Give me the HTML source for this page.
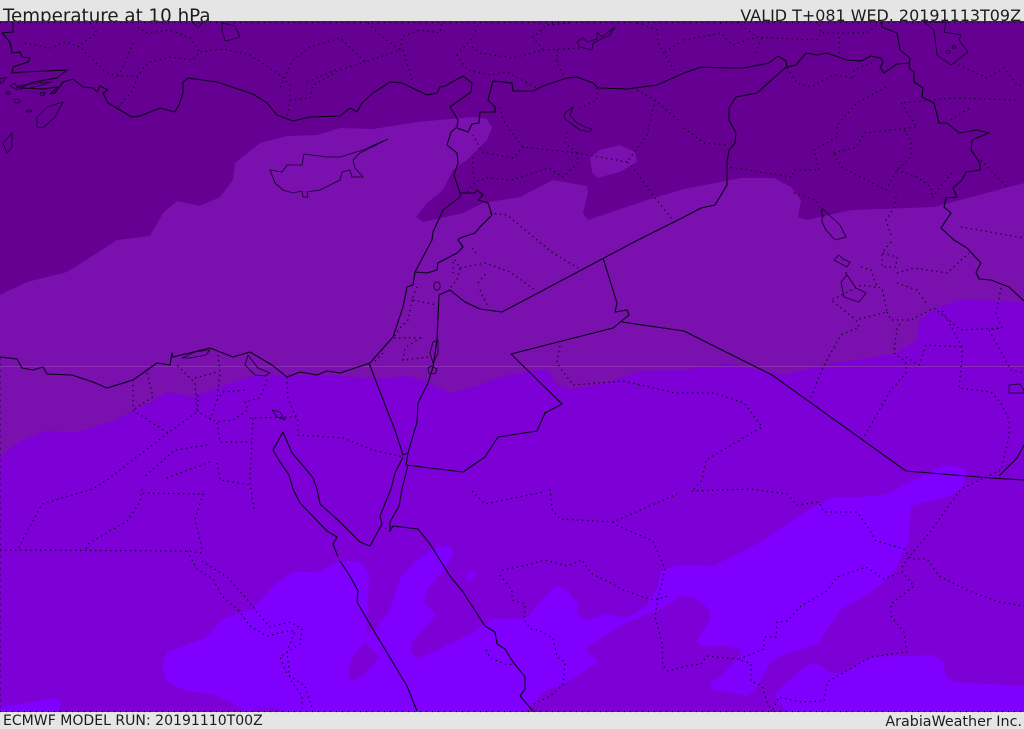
<!DOCTYPE html>
<html><head><meta charset="utf-8"><title>Temperature at 10 hPa</title>
<style>
html,body{margin:0;padding:0;background:#e5e5e5;width:1024px;height:729px;overflow:hidden}
svg{display:block}
text{font-family:"DejaVu Sans","Liberation Sans",sans-serif;fill:#1c1c1c}
.c{fill:none;stroke:#060214;stroke-width:1.1;stroke-linejoin:round}
.t{fill:none;stroke:#12022c;stroke-width:.85;stroke-linejoin:round}
.d{fill:none;stroke:#08011c;stroke-width:1.2;stroke-dasharray:1.3 3.7}
</style></head><body>
<svg width="1024" height="729" viewBox="0 0 1024 729" xmlns="http://www.w3.org/2000/svg">
<rect width="1024" height="729" fill="#e5e5e5"/>
<text x="3" y="22" font-size="18.26">Temperature at 10 hPa</text>
<text x="1021" y="21" font-size="15.95" text-anchor="end">VALID T+081 WED. 20191113T09Z</text>
<text x="3" y="725" font-size="14.05">ECMWF MODEL RUN: 20191110T00Z</text>
<text x="1022" y="726" font-size="14.3" text-anchor="end">ArabiaWeather Inc.</text>
<rect x="0" y="21" width="1024" height="691" fill="#7d00d6"/>
<!-- mid band -->
<polygon fill="#7a10ae" points="0,21 1024,21 1024,302 961,299 937,308 919,320 917,340 894,354 824,365 784,375 727,363 684,370 640,371 607,383 570,389 557,385 550,373 543,369 507,375 473,387 450,393 427,382 407,376 373,379 340,376 257,375 233,382 193,397 167,392 140,408 110,422 77,432 43,431 17,443 0,457"/>
<line x1="0" y1="366.5" x2="1024" y2="366.5" stroke="#8a2cb4" stroke-width="1"/>
<!-- dark top -->
<polygon fill="#660092" points="0,21 1024,21 1024,183 934,207 851,210 807,220 798,217 801,200 791,187 774,178 741,178 684,189 657,197 623,208 588,220 583,213 588,192 587,186 553,180 520,197 483,203 463,213 423,222 416,217 427,203 443,190 453,170 467,160 487,140 492,128 487,119 473,117 417,122 373,129 340,128 317,135 287,136 260,143 235,163 233,180 220,197 200,206 177,201 163,213 150,236 117,240 97,253 67,272 27,282 0,295"/>
<polygon fill="#7a10ae" points="590,157 600,150 620,145 635,152 637,162 620,172 597,178 592,172"/>
<!-- brightest -->
<polygon fill="#7f00ff" points="162,666 167,652 207,637 223,619 253,609 273,586 293,572 317,572 340,561 357,561 369,572 368,602 366,634 373,631 388,614 400,579 417,559 437,547 450,546 453,552 447,566 427,589 424,602 436,614 412,642 410,652 418,658 433,652 473,632 493,619 527,618 540,602 557,585 567,591 577,602 578,616 587,620 607,614 627,618 647,606 658,586 660,572 673,566 704,565 711,567 761,542 797,517 831,497 861,497 884,495 914,480 944,465 964,467 966,473 961,489 951,496 931,501 911,506 909,539 897,566 884,582 864,596 841,609 827,629 817,644 794,651 774,659 766,669 759,686 747,696 734,693 712,689 710,684 721,676 741,654 741,649 727,646 701,646 697,641 711,617 709,609 694,597 680,596 660,609 627,622 607,634 588,646 587,652 598,661 573,679 543,692 525,712 287,712 273,707 247,711 230,702 213,694 187,691 167,682"/>
<polygon fill="#7d00d6" points="365,642 379,657 367,672 352,682 348,676 352,656"/>
<polygon fill="#7f00ff" points="466,579 470,572 477,571 475,576 467,582"/>
<polygon fill="#7f00ff" points="0,707 33,702 57,698 61,701 58,712 0,712"/>
<polygon fill="#7f00ff" points="776,692 794,676 811,663 821,666 831,674 844,672 871,657 934,655 943,662 946,677 954,682 1024,686 1024,712 787,712 776,697"/>
<!-- dotted internal boundaries -->
<g class="d">
<path d="M25 43L50 48 65 42 80 47 90 57 107 73 117 76 138 76 145 66 150 62 170 57 193 60 200 52 223 49 250 55 280 75 290 85 290 100 287 118"/>
<path d="M133 43L123 67 117 76M138 27L147 33 170 30 190 38 200 52M90 23L97 33 80 45M118 107L133 90 138 76"/>
<path d="M280 87L293 60 310 47 340 38 365 62 400 50 380 35 367 22M290 100L310 98 313 85 340 70 365 62M307 82L340 68"/>
<path d="M400 50L402 37 420 30 440 33 442 22M403 50L413 83M457 55L473 37 478 25M457 55L467 70 490 75 507 72 537 88"/>
<path d="M472 47L480 53 513 58 543 50 533 37 547 25 570 23M543 50L580 48M557 50L557 63 565 78M637 23L657 30 658 43 675 72M665 52L680 42"/>
<path d="M597 88L597 100 580 108M637 90L655 100 680 122M655 100L647 135 627 162 633 167 655 198 673 220M627 162L577 153 523 147 513 158 482 152 473 135M500 107L503 120 517 140 523 147M577 153L578 163 563 177 548 168 512 180 487 178 475 182 467 192M473 157L473 172 475 182M567 132L565 143 577 153M490 213L507 215 537 240 553 253 578 268"/>
<path d="M684 40L721 33 732 45 757 37 817 40 821 33 867 33 879 23M737 22L757 37M721 23L718 27M762 38L754 57M819 25L821 33M839 37L839 57"/>
<path d="M787 68L797 83 811 87 834 75 854 78 854 70 874 62M886 87L857 103 837 125 837 137 814 150 819 170 794 170 792 177 727 167"/>
<path d="M834 153L857 147 864 133 917 127 901 103 951 98 1017 100M904 130L911 140 911 157 897 170 886 190 841 167 834 153M897 170L917 177 931 187 932 198 954 170M951 120L971 107M896 197L894 208 886 220 892 238"/>
<path d="M684 128L704 143 729 145M794 193L816 200 824 217M981 160L1007 187M954 63L987 78 1004 68 1017 85 1024 85M961 227L1024 238"/>
<path d="M133 380L133 410 137 413 168 433 197 412 195 383 177 365M147 373L153 397 133 410M218 355L220 373 217 400 210 420M195 378L217 372M198 395L198 412 217 422 233 420 248 410 245 402 260 398 267 380M217 400L223 392 247 390M250 418L297 417"/>
<path d="M287 377L288 400 298 420 298 435 343 438 373 450 403 457M253 418L250 480 251 489 254 510M217 423L220 442 252 442M168 433L107 480 93 489 42 504 18 549M207 445L175 450 143 478M210 462L180 473 165 479M217 463L220 480 252 485M142 489L140 502 127 521 88 544 86 549M143 493L193 494 203 494 195 519 202 549"/>
<path d="M0 550L187 551 202 553M187 551L197 569 213 579 222 596 240 612 250 626 267 636 287 631 295 631 287 652 290 679 302 696 302 711M202 561L227 577 247 599 260 616 270 627 290 622 302 629 300 644 280 657 287 674 305 686 313 711"/>
<path d="M560 346L557 363 573 385 623 381 675 393 714 393 744 403 762 427 706 460 702 480 692 491M472 491L485 504 543 492M550 489L552 509 560 519 613 522 677 494M692 491L751 489 787 494 797 505 819 502 824 512 857 512 867 526 876 541 904 549 911 559 927 559 939 576 969 591 999 602 1024 606"/>
<path d="M613 522L618 526 653 541 665 569 657 604 655 617 662 642 663 666 668 671 687 666 701 664 707 656 737 659 751 664 751 681 762 686 767 702 772 711"/>
<path d="M739 659L764 649 764 637 776 637 777 622 787 621 801 606 827 591 837 577 866 567 884 579 902 572 914 586 891 604 891 616 904 632 907 652 871 657 827 682 824 701 801 702 779 697 772 711M902 567L909 557 927 536 961 489 1001 470 1009 437 1009 420 1001 403 991 392 959 388 962 357 962 347 941 308"/>
<path d="M809 402L824 365 841 335 859 327 856 320 887 312 882 288 861 285 842 295 831 300 856 320M887 312L891 320 911 320 934 308 961 330 1001 328M862 440L891 390 906 373 906 362 894 353 897 328 901 322M906 357L919 365 926 345 962 347M897 283L917 290 926 303M861 267L871 270 877 287M891 242L882 253 897 257 896 267 882 267 882 253M897 273L914 268 947 273 969 253M1001 288L996 313 1002 328 989 330 1011 370 1024 373"/>
<path d="M455 260L460 268 457 280 450 288M453 262L453 277M460 268L485 263 510 272 535 290M478 283L487 272M480 290L488 307M472 248L477 254M417 287L412 300 437 305M412 300L408 320 400 328 393 338 420 338 405 348 403 360 428 357M383 353L373 363"/>
<path d="M381 525L392 533M502 570L527 565 545 560 567 566 582 560 592 574 611 583 621 589 632 593 640 596 654 600 668 596M500 575L512 590 512 600 525 604 524 620 531 629 538 630 553 638 557 657 565 662 563 685 550 696 532 705M486 650L490 658 505 664 520 665"/>
<path d="M0 358V712" stroke-dasharray="1.2 4.8"/>
<path d="M0 22.5H1024M0 711.5H1024" stroke-dasharray="1 5"/>
</g>
<!-- coastlines and borders -->
<g class="c">
<path d="M13 23L13 32 2 33 10 42 12 53 20 52 22 57 30 58 28 62 13 67 12 73 23 72 67 70 57 78 33 82 20 88 43 89 58 87 50 94 55 93 63 82 73 79 83 87 93 88 97 92 100 86 108 90 103 93 108 103 120 110 132 117 140 116 160 108 175 112 179 105 183 93 183 82 188 78 217 82 253 94 267 103 277 115 293 121 310 117 340 116 350 108 357 112 362 103 373 93 390 82 402 83 427 95 437 93 440 87 445 86 463 76 472 83 471 92 450 107 458 120 457 127 451 132 447 145 457 153 458 163 454 175 460 193 460 197 443 210 433 232 432 240 415 272 413 285 407 287 403 307 393 337 370 363 340 373 327 371 317 375 300 372 287 377 272 365 250 352 233 357 210 348 173 357 172 353 170 365 157 363 133 380 107 388 93 382 72 375 47 374 43 367 33 370 22 368 17 359 0 357"/>
<path d="M457 128L468 132 472 124 479 123 480 112 495 112 495 107 488 100 493 81 512 83 513 91 533 91 543 86 567 78 577 77 593 83 598 88 627 89 657 85 684 73 701 67 727 68 744 68 769 63 778 56 786 61 787 67 796 65 806 53 817 55 827 53 847 60 861 61 871 56 881 58 883 63 880 67 884 73 897 64 910 63"/>
<path d="M881 22L882 27 897 33 900 50 910 58 909 68 914 72 914 82 923 88 922 97 934 103 939 123 947 123 959 133 977 130 989 133 972 140 971 150 980 163 980 170 966 172 962 180 953 188 957 197 946 198 944 207 951 213 941 228 954 240 967 248 981 263 976 272 979 279 991 280 1009 287 1024 301"/>
<path d="M786 67L757 93 736 97 729 108 729 120 736 133 735 143 729 150 727 163 727 185 715 205 701 208 684 217 638 240 502 312 480 309 465 302 450 290 439 295 438 317 437 340 433 367 428 383 418 403 417 422 408 453 406 465 463 472 485 457 498 437 537 431 545 413 562 404 511 354 613 328 629 315 627 310 615 312 617 303 603 258"/>
<path d="M622 322L684 331 772 375 906 471 991 478 1024 480M999 476L1017 458 1024 445"/>
<path d="M460 193L475 193 477 190 483 195 478 200 488 203 492 215 480 227 475 233 460 238 458 240 463 247 457 253 438 263 437 270 427 273 415 272"/>
<path d="M369 363L387 410 395 430 403 455 408 453M403 457L395 473 391 489 380 516 382 524 370 546 360 542 340 522 320 504 317 489 313 478 305 468 292 453 283 432 273 450 280 462 289 475 293 489 300 503 327 531 337 537 333 544 338 557"/>
<path d="M408 465L402 489 399 506 390 522 390 531 393 526 418 529 430 544 450 576 463 592 485 626 495 632 497 644 505 649 513 662 525 677 525 689 520 696 533 711"/>
<path d="M340 561L350 576 358 591 357 602 377 636 407 686 417 711"/>
</g>
<g class="t">
<polygon points="270,170 282,172 287,165 302,165 304,154 327,157 340,157 363,150 388,139 360,153 353,160 355,168 363,177 352,177 350,170 342,172 340,180 320,190 307,192 308,197 303,197 302,191 293,193 283,190 275,183"/>
<polygon points="63,102 47,107 37,117 37,127 43,128 55,117"/>
<polygon points="12,133 3,143 7,153 12,147"/>
<polygon points="0,79 7,77 2,83 0,84"/><polygon points="18,86 30,84 45,82 52,82 30,88 20,89"/>
<polygon points="40,93 45,92 44,96 41,95"/><polygon points="15,83 18,90 10,86"/><ellipse cx="8" cy="93" rx="2" ry="1.3"/><ellipse cx="17" cy="101" rx="3" ry="2"/><ellipse cx="29" cy="111" rx="3" ry="1"/>
<polygon points="222,23 235,26 240,37 230,40 225,41 222,30"/><path d="M193 22L198 28 203 22"/>
<polygon points="577,42 583,38 587,42 597,39 597,32 602,37 615,27 610,35 593,43 592,50 580,47"/>
<polygon points="573,107 565,113 564,118 573,125 580,130 590,132 592,129 585,127 577,123 570,115"/>
<polygon points="924,22 934,30 937,55 951,65 968,52 959,40 961,35 944,32 946,22"/><ellipse cx="948" cy="52" rx="2" ry="1.5"/><ellipse cx="954" cy="47" rx="2" ry="1.2"/>
<ellipse cx="437" cy="286" rx="3.2" ry="4.2"/>
<polygon points="438,340 433,342 430,353 433,363 438,353"/><polygon points="428,368 429,373 435,374 437,369 431,366"/>
<polygon points="822,208 826,212 840,225 846,237 835,240 826,230 822,222"/>
<polygon points="839,255 834,260 847,267 850,262 843,259"/><path d="M846 272V275"/>
<polygon points="841,282 847,275 856,288 866,293 859,302 844,297"/>
<polygon points="1009,385 1020,384 1024,390 1024,393 1009,393"/>
<polygon points="182,358 195,352 210,350 206,355 190,358"/>
<polygon points="245,365 248,355 258,368 270,373 265,376 255,375"/>
<polygon points="272,410 280,412 285,420 277,417"/>
</g>
</svg>
</body></html>
